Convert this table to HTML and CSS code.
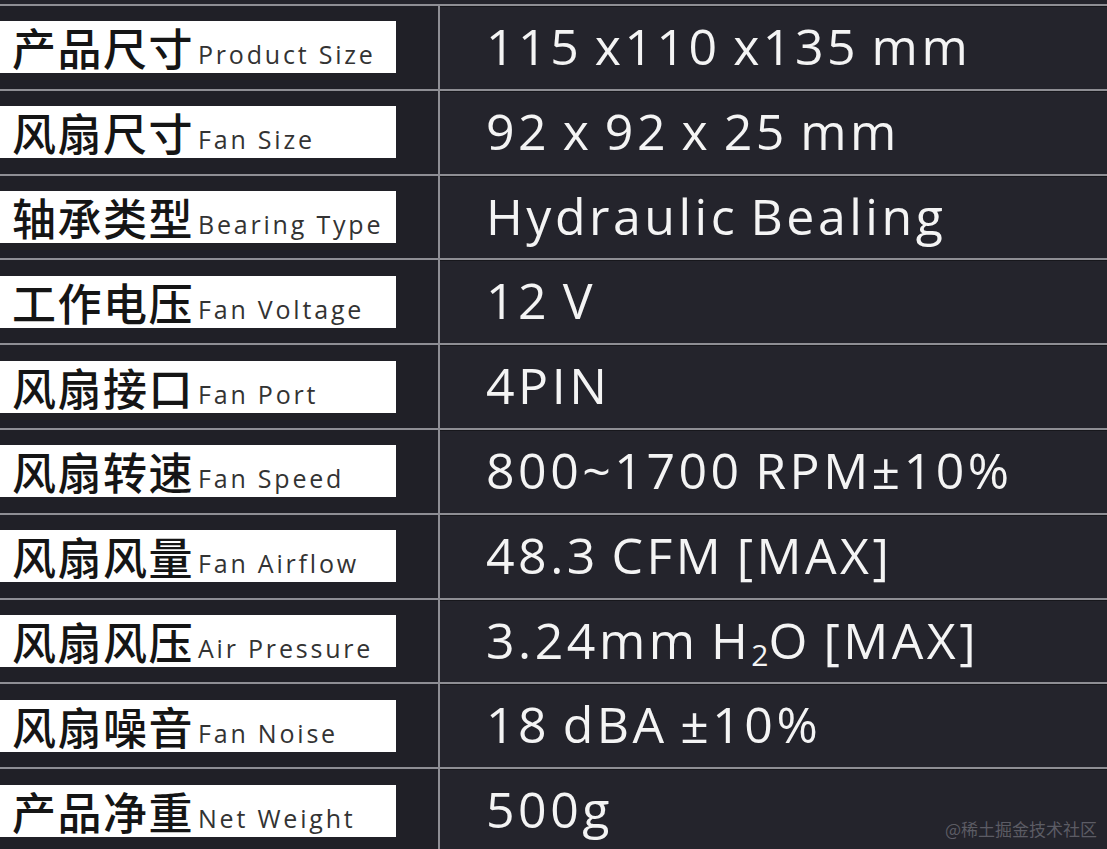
FILE: index.html
```html
<!DOCTYPE html>
<html lang="zh-CN">
<head>
<meta charset="utf-8">
<title>Specs</title>
<link rel="stylesheet" href="styles.css">
</head>
<body>
<div class="specs">
  <div class="row"><div class="label"><div class="tag"><span class="zh">产品尺寸</span><span class="en">Product Size</span></div></div><div class="value">115 x110 x135 mm</div></div>
  <div class="row"><div class="label"><div class="tag"><span class="zh">风扇尺寸</span><span class="en">Fan Size</span></div></div><div class="value">92 x 92 x 25 mm</div></div>
  <div class="row"><div class="label"><div class="tag"><span class="zh">轴承类型</span><span class="en">Bearing Type</span></div></div><div class="value">Hydraulic Bealing</div></div>
  <div class="row"><div class="label"><div class="tag"><span class="zh">工作电压</span><span class="en">Fan Voltage</span></div></div><div class="value">12 V</div></div>
  <div class="row"><div class="label"><div class="tag"><span class="zh">风扇接口</span><span class="en">Fan Port</span></div></div><div class="value">4PIN</div></div>
  <div class="row"><div class="label"><div class="tag"><span class="zh">风扇转速</span><span class="en">Fan Speed</span></div></div><div class="value">800~1700 RPM±10%</div></div>
  <div class="row"><div class="label"><div class="tag"><span class="zh">风扇风量</span><span class="en">Fan Airflow</span></div></div><div class="value">48.3 CFM [MAX]</div></div>
  <div class="row"><div class="label"><div class="tag"><span class="zh">风扇风压</span><span class="en">Air Pressure</span></div></div><div class="value">3.24mm H<span class="sub">2</span>O [MAX]</div></div>
  <div class="row"><div class="label"><div class="tag"><span class="zh">风扇噪音</span><span class="en">Fan Noise</span></div></div><div class="value">18 dBA ±10%</div></div>
  <div class="row"><div class="label"><div class="tag"><span class="zh">产品净重</span><span class="en">Net Weight</span></div></div><div class="value">500g</div></div>
</div>
<div class="watermark">@稀土掘金技术社区</div>
</body>
</html>
```

FILE: styles.css
```css
html, body {
  margin: 0;
  padding: 0;
  width: 1107px;
  height: 849px;
  overflow: hidden;
  background: #24242c;
}

.specs {
  display: flex;
  flex-direction: column;
  padding-top: 4px;
}

.row {
  display: flex;
  height: 84.8px;
  box-sizing: border-box;
  border-top: 2px solid #8e8e94;
  box-shadow: inset 0 1px 0 #17171c;
}

.label {
  width: 440px;
  flex: none;
  box-sizing: border-box;
  border-right: 2px solid #8e8e94;
  background: #202027;
  display: flex;
  align-items: center;
}

.tag {
  width: 396px;
  height: 52px;
  background: #ffffff;
  box-sizing: border-box;
  padding-left: 12px;
  line-height: 52px;
  white-space: nowrap;
}

.zh {
  font-family: "Noto Sans CJK SC", sans-serif;
  font-size: 44px;
  font-weight: 500;
  letter-spacing: 1.5px;
  color: #151515;
}

.en {
  font-family: "Open Sans", "Noto Sans", sans-serif;
  font-size: 25px;
  letter-spacing: 2.8px;
  color: #333333;
  margin-left: 4px;
  vertical-align: 2px;
}

.value {
  flex: 1;
  padding-left: 46px;
  line-height: 80px;
  font-family: "Open Sans", "Noto Sans", sans-serif;
  font-size: 50px;
  letter-spacing: 3.5px;
  word-spacing: -4px;
  color: #f4f4f4;
  white-space: pre;
}

.sub {
  font-size: 30px;
  letter-spacing: 0;
  vertical-align: -7px;
  line-height: 0;
}

.watermark {
  position: absolute;
  right: 10px;
  bottom: 8px;
  font-family: "Noto Sans CJK SC", sans-serif;
  font-size: 17px;
  color: rgba(200, 200, 210, 0.35);
}
```
